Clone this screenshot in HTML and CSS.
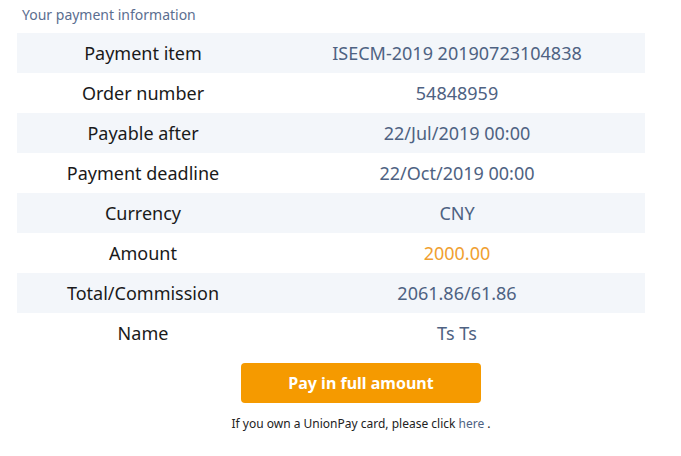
FILE: index.html
```html
<!DOCTYPE html>
<html>
<head>
<meta charset="utf-8">
<link rel="stylesheet" href="styles.css">
</head>
<body>
<div class="page">
  <div class="title">Your payment information</div>
  <table class="info">
    <tr class="odd"><td class="label">Payment item</td><td class="value">ISECM-2019 20190723104838</td></tr>
    <tr><td class="label">Order number</td><td class="value">54848959</td></tr>
    <tr class="odd"><td class="label">Payable after</td><td class="value">22/Jul/2019 00:00</td></tr>
    <tr><td class="label">Payment deadline</td><td class="value">22/Oct/2019 00:00</td></tr>
    <tr class="odd"><td class="label">Currency</td><td class="value">CNY</td></tr>
    <tr><td class="label">Amount</td><td class="value amount">2000.00</td></tr>
    <tr class="odd"><td class="label">Total/Commission</td><td class="value">2061.86/61.86</td></tr>
    <tr><td class="label">Name</td><td class="value">Ts Ts</td></tr>
  </table>
  <div class="actions">
    <button class="pay">Pay in full amount</button>
    <p class="note">If you own a UnionPay card, please click <a class="link" href="#">here</a> .</p>
  </div>
</div>
</body>
</html>
```
FILE: styles.css
```css
html, body {
  margin: 0;
  padding: 0;
  background: #ffffff;
}
body {
  font-family: "Noto Sans", "Open Sans", sans-serif;
}
.page {
  padding: 5px 0 0 17px;
  width: 628px;
}
.title {
  font-size: 14px;
  color: #5b6e90;
  padding-left: 5px;
  height: 28px;
  line-height: 20px;
}
.info {
  width: 628px;
  border-collapse: collapse;
  table-layout: fixed;
}
.info tr {
  height: 40px;
}
.info tr.odd {
  background: #f3f6fa;
}
.info td {
  padding: 0;
  text-align: center;
  font-size: 18px;
  line-height: 40px;
}
.label {
  width: 252px;
  color: #1a1a1a;
}
.value {
  color: #4e6282;
}
.value.amount {
  color: #f0a030;
}
.actions {
  display: flex;
  flex-direction: column;
  align-items: center;
  padding: 10px 0 0 60px;
}
.pay {
  width: 240px;
  height: 40px;
  border: none;
  border-radius: 4px;
  background: #f59a00;
  color: #ffffff;
  font-family: "Noto Sans", "Open Sans", sans-serif;
  font-weight: bold;
  font-size: 16px;
}
.note {
  margin: 12px 0 0 0;
  font-size: 12px;
  color: #222222;
}
.link {
  color: #4e6282;
  text-decoration: none;
}
```
